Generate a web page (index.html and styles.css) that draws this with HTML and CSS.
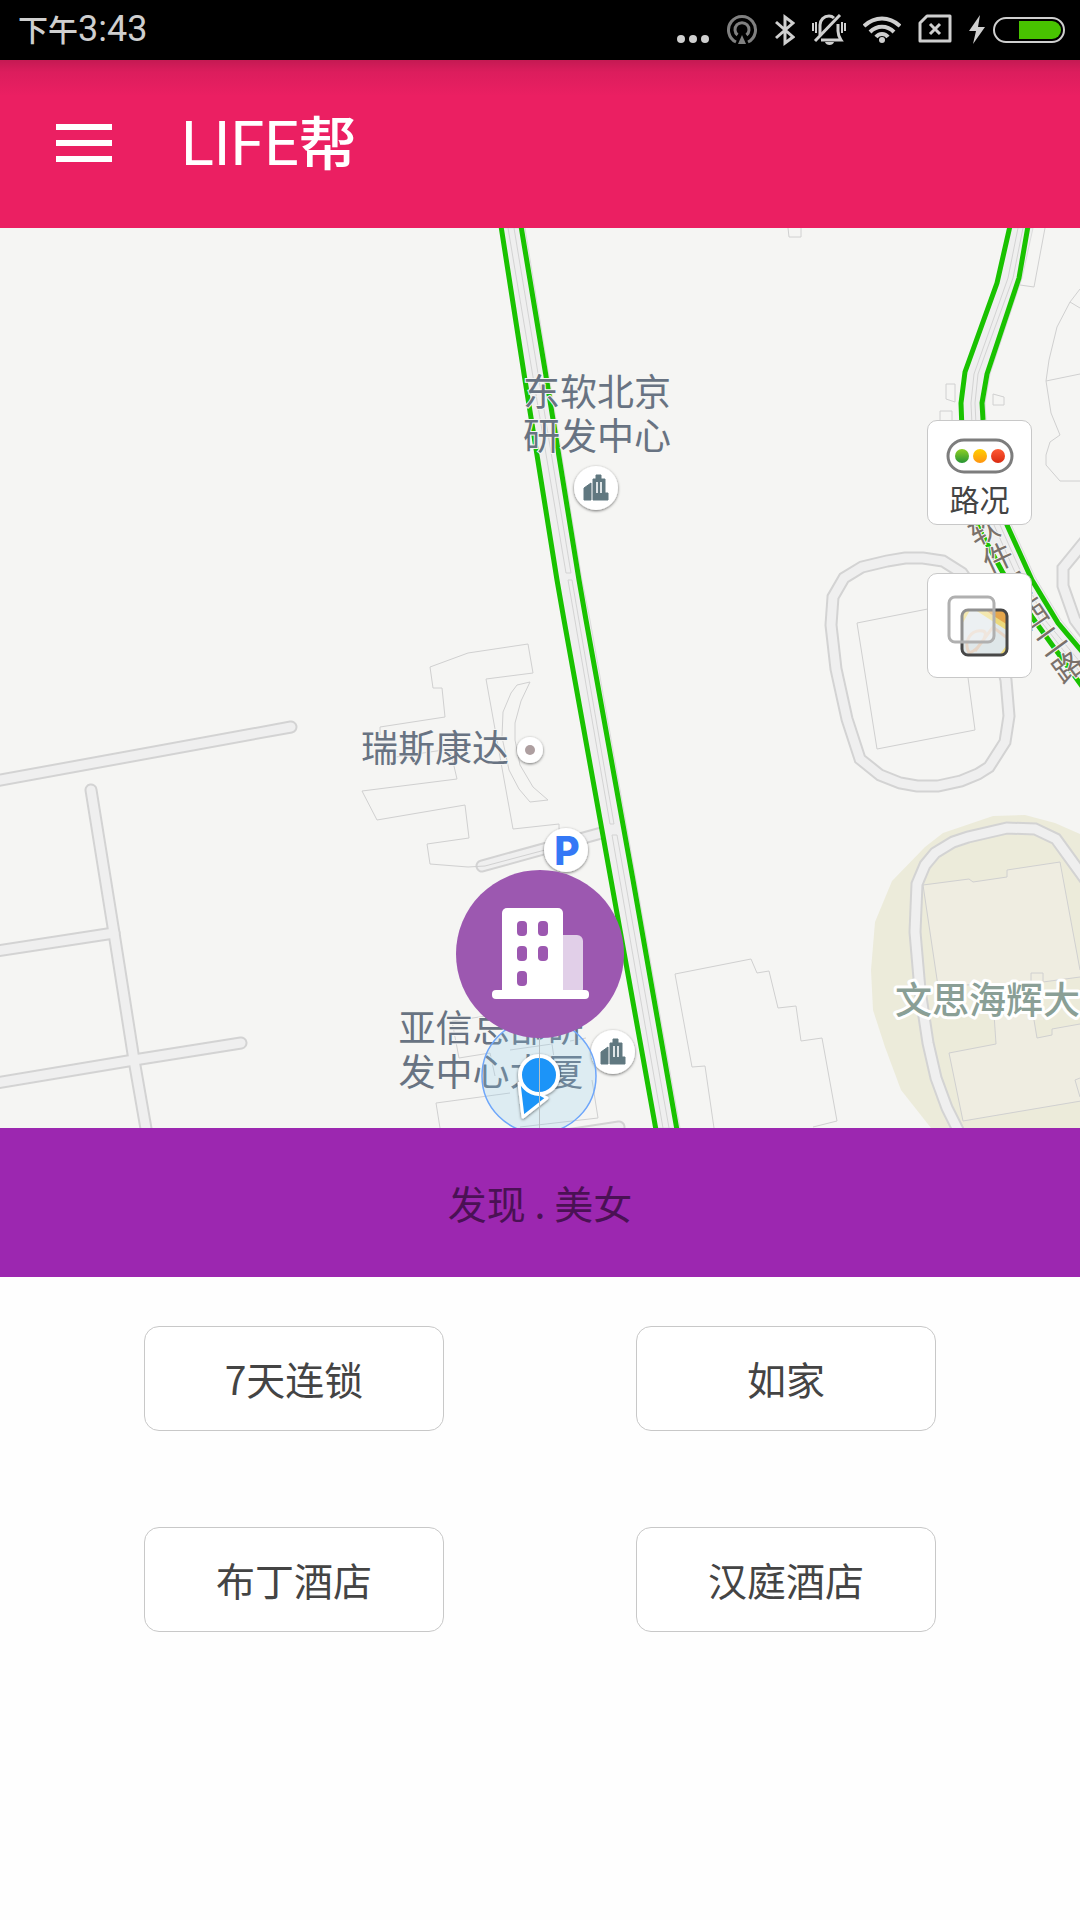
FILE: index.html
```html
<!DOCTYPE html>
<html lang="zh-CN">
  <head>
    <meta charset="UTF-8" />
    <meta name="viewport" content="width=device-width, initial-scale=1.0" />
    <title>LIFE帮</title>
    <link rel="stylesheet" href="styles.css">
  </head>
  <body>
    <div class="status-bar">
      <div class="clock"><span class="ampm">下午</span>3:43</div>
      <div class="status-icons">
        <svg width="32" height="32" fill="#cfcfcf">
          <circle cx="4" cy="25" r="4" />
          <circle cx="16" cy="25" r="4" />
          <circle cx="28" cy="25" r="4" />
        </svg>
        <svg width="32" height="32" fill="none" stroke="#808080" stroke-width="3">
          <path d="M10 28A13.500 13.500 0 1 1 22 28" />
          <path d="M11.500 21A7 7 0 1 1 20.500 21" />
          <path d="M16 21l4 9h-8z" fill="#808080" stroke="none" />
        </svg>
        <svg width="20" height="32" fill="none" stroke="#cfcfcf" stroke-width="3">
          <path d="M1 8l17 15-8 6V3l8 6L1 24" />
        </svg>
        <svg width="34" height="32" fill="none" stroke="#cfcfcf" stroke-width="3">
          <path d="M3 27L28 1" />
          <path d="M8 21V11c0-5 4-9 9-9 2 0 4 1 5 2" />
          <path d="M9 26h20c-2-3-3-5-3-9v-7" />
          <path d="M1 9v8M4 8v11M30 8v11M33 9v8" stroke-width="2" />
          <path d="M13 28h9c-1 4-8 4-9 0z" fill="#cfcfcf" stroke="none" />
        </svg>
        <svg width="38" height="32" fill="none" stroke="#cfcfcf" stroke-width="4">
          <path d="M1 12c11-10 25-10 36 0" />
          <path d="M7 18c7-7 17-7 24 0" />
          <path d="M13 23c3-4 9-4 12 0" />
          <circle cx="19" cy="26" r="3" fill="#cfcfcf" stroke="none" />
        </svg>
        <svg width="34" height="32" fill="none" stroke="#cfcfcf" stroke-width="3">
          <path d="M2 27V9l7-7h23v25z" stroke-linejoin="round" />
          <path d="M12 10l10 10M22 10L12 20" />
        </svg>
        <div class="battery">
          <svg width="16" height="32" fill="#cfcfcf">
            <path d="M11 1L0 17h7L4 30 16 13H9z" />
          </svg>
          <svg width="72" height="32" fill="none">
            <rect x="1" y="4" width="70" height="24" rx="12" stroke="#cfcfcf" stroke-width="2" />
            <path d="M26 7h33a9 9 0 0 1 0 18H26z" fill="#48c400" />
          </svg>
        </div>
      </div>
    </div>

    <header class="toolbar">
      <button class="menu-btn" type="button" aria-label="菜单">
        <svg width="56" height="38" fill="#fff">
          <rect width="56" height="6" />
          <rect y="16" width="56" height="6" />
          <rect y="32" width="56" height="6" />
        </svg>
      </button>
      <h1>LIFE<span class="cn">帮</span></h1>
    </header>

    <div class="map">
      <svg class="map-canvas" viewBox="0 228 1080 900">
        <defs>
          <filter id="shadow" x="-30%" y="-30%" width="160%" height="160%">
            <feDropShadow dx="0" dy="1" stdDeviation="1.500" flood-opacity=".55" />
          </filter>
          <g id="office">
            <circle r="22" fill="#fff" filter="url(#shadow)" />
            <path d="M-12 0l7-5v17h-7zM-3-9h3v-4h5v4h4v14h3v7H-3z" fill="#607880" stroke="#607880" stroke-linejoin="round" />
            <path d="M1-6v11M5-6v11" stroke="#dfe5e7" stroke-width="2" />
          </g>
          <!-- side roads, drawn twice: casing and fill -->
          <g id="streets">
            <path d="M-10 782L291 727" />
            <path d="M91 790L114 933 134 1060 148 1140" />
            <path d="M-10 952L114 933" />
            <path d="M-10 1084L134 1060 241 1043" />
            <path d="M482 866L605 832" />
            <path d="M520 1142L619 1127" />
            <path d="M962 573L943 561 923 558H905L887 561 862 567 844 578 833 597 831 625 836 669 847 719 860 759 880 775 900 783 917 786H938L961 781 978 774 989 767 1005 742 1009 716 1006 680 985 605z" />
            <path d="M1090 535L1063 568V586L1075 620 1090 640" />
            <path d="M1090 886L1056 839 1035 829 1007 828 968 837 953 842 935 853 925 865 917 884 915 932 920 990 928 1043 936 1078 947 1108 963 1140" />
          </g>
        </defs>

        <path class="park" d="M1080 834L1055 823 1025 815 993 816 943 833 925 847 892 881 875 922 871 970 873 1010 885 1047 901 1090 931 1128H1080z" />
        <path class="block" d="M923 885L969 879 973 882 1007 877V870L1060 862 1080 970V1101L963 1121 949 1053 996 1044 992 984 938 986z" />
        <path class="park" d="M1034 1020L1037 1038 1052 1035V1029L1080 1024V977L1043 982V1020z" />

        <g class="outline">
          <path d="M923 885L969 879 973 882 1007 877V870L1060 862 1080 970M923 885L938 986 992 984 996 1044 949 1053 963 1121 1081 1101" />
          <path d="M1080 977L1043 982V973H1031V984M1034 1020L1037 1038 1052 1035V1029L1080 1024M1080 1078L1075 1080 1080 1097" />
          <path d="M788 228L789 237H801V228M1045 228L1034 287 1020 285" />
          <path d="M1080 289L1070 302 1057 327 1049 360 1046 381 1051 413 1060 435 1050 442 1046 455V465L1060 481H1080M1046 381L1080 374M1070 302L1080 308" />
          <path d="M946 384H955V402L946 399zM940 420V411H952V420M993 394L1004 397V405H993z" />
          <path d="M857 623L958 603 975 730 877 749z" />
          <path d="M714 1128L705 1066 692 1067 675 974 751 959 757 973 769 971 778 1008 796 1006 801 1041 822 1038 837 1121 813 1127" />
          <path d="M380 735V727L445 717 442 688H433L430 667 468 653 528 644 533 673 486 679 513 829 559 824V833" />
          <path d="M396 757L450 749 457 779 362 791 377 820 465 805 469 838 427 844 430 864 468 867" />
          <path d="M530 682L517 685 511 693 503 712 502 737 509 770 519 789 530 802 548 800 533 787 520 765 515 740V723L521 701z" />
          <path d="M452 1021L459 1058 490 1053 495 1076M452 1021L500 1014M440 1128L436 1103 510 1093M510 1050L552 1044 555 1065M570 1041L586 1038M592 1080L598 1118 520 1127" />
        </g>

        <use href="#streets" class="casing" />
        <use href="#streets" class="road" />
        <path class="outline" d="M468 867L485 866 545 850" />

        <path class="carriage" d="M501 228L557 580 655 1128H680L590 620 582 580 525 228z" />
        <path class="carriage" d="M1010 228L997 283 965 372 961 403 962 430 977 525 1003 573 1032 617 1090 698V655L1061 620 1035 577 1010 522 986 420 985 403 990 374 1022 278 1033 228z" />
        <path class="median" d="M508 228L566 573H571L514 228M568 580H572L614 824H610zM612 835H617L669 1128M612 835L663 1128" />
        <path class="median" d="M1018 228L1008 278 974 374 971 403 972 425M1023 228L1013 278 978 374 975 403 976 425M1000 525L1020 570 1045 620 1080 662M994 525L1014 570 1040 620 1080 672" />
        <g class="traffic">
          <path d="M501 226L525 380 557 580 564 620 611 880 656 1130" />
          <path d="M521 226L545 370 579 580 586 620 633 880 677 1130" />
          <path d="M1010 226L997 283 965 372 961 403 962 430 977 525 1003 573 1032 617 1084 689" />
        </g>

        <g class="street-name">
          <text transform="translate(984 530) rotate(-25)" y="11">软</text>
          <text transform="translate(998 558) rotate(-25)" y="11">件</text>
          <text transform="translate(1015 588) rotate(-30)" y="11">园</text>
          <text transform="translate(1033 614) rotate(-34)" y="11">西</text>
          <text transform="translate(1051 641) rotate(-36)" y="11">二</text>
          <text transform="translate(1068 667) rotate(-36)" y="11">路</text>
        </g>
        <path class="traffic" d="M1028 226L1019 278 987 374 982 403 983 420 1007 525 1032 580 1058 623 1084 654" />

        <g class="place">
          <text x="597" y="406">东软北京</text>
          <text x="597" y="450">研发中心</text>
          <text x="435" y="762">瑞斯康达</text>
          <text x="491" y="1042">亚信总部研</text>
          <text x="491" y="1086">发中心大厦</text>
        </g>
        <text class="place-park" x="895" y="1014">文思海辉大</text>

        <use href="#office" x="596" y="488" />
        <use href="#office" x="613" y="1052" />
        <circle cx="530" cy="750" r="13" fill="#fff" filter="url(#shadow)" />
        <circle cx="530" cy="750" r="5" fill="#ae9fa0" />
        <circle cx="566" cy="850" r="22" fill="#fff" filter="url(#shadow)" />
        <text class="parking" x="567" y="865">P</text>

        <!-- my location -->
        <circle cx="539" cy="1076" r="57" fill="#8acdf0" fill-opacity=".22" stroke="#6ea6fa" stroke-width="1.500" />
        <g filter="url(#shadow)">
          <path d="M519 1083L523 1117 547 1098z" fill="#1b94f8" stroke="#fff" stroke-width="3" stroke-linejoin="round" />
          <circle cx="539" cy="1075" r="19" fill="#1b94f8" stroke="#fff" stroke-width="4" />
        </g>
        <path d="M539.500 1038V1128" stroke="#b8c0c4" />

        <!-- hotel pin -->
        <circle cx="540" cy="954" r="84" fill="#9c58b0" />
        <rect x="556" y="935" width="27" height="60" rx="6" fill="#e1cfe8" />
        <rect x="502" y="908" width="61" height="88" rx="5" fill="#fff" />
        <rect x="492" y="990" width="97" height="9" rx="4" fill="#fff" />
        <g fill="#9c58b0">
          <rect x="517" y="921" width="10" height="15" rx="4" />
          <rect x="538" y="921" width="10" height="15" rx="4" />
          <rect x="517" y="946" width="10" height="15" rx="4" />
          <rect x="538" y="946" width="10" height="15" rx="4" />
          <rect x="517" y="971" width="10" height="15" rx="4" />
        </g>
      </svg>

      <div class="map-tools">
        <button class="tool traffic-tool" type="button">
          <svg width="68" height="36">
            <defs>
              <linearGradient id="g" x2="0" y2="1"><stop stop-color="#8fd024" /><stop offset="1" stop-color="#259433" /></linearGradient>
              <linearGradient id="y" x2="0" y2="1"><stop stop-color="#ffd000" /><stop offset="1" stop-color="#ff9412" /></linearGradient>
              <linearGradient id="r" x2="0" y2="1"><stop stop-color="#ff5a34" /><stop offset="1" stop-color="#d92a10" /></linearGradient>
            </defs>
            <rect x="2" y="2" width="64" height="32" rx="16" fill="#fff" stroke="#7d7d7d" stroke-width="3" />
            <circle cx="16" cy="18" r="7" fill="url(#g)" />
            <circle cx="34" cy="18" r="7" fill="url(#y)" />
            <circle cx="52" cy="18" r="7" fill="url(#r)" />
          </svg>
          <span>路况</span>
        </button>
        <button class="tool" type="button" aria-label="图层">
          <svg width="66" height="62">
            <clipPath id="tile"><rect x="15" y="15" width="45" height="45" rx="6" /></clipPath>
            <g clip-path="url(#tile)" fill="none">
              <path d="M15 15h45v45H15z" fill="#dfe7e9" />
              <path d="M35 12h30v26z" fill="#e5a64c" />
              <path d="M22 8l42 27M14 26l8-14M54 62l9-12" stroke="#ecd97c" stroke-width="5" />
              <path d="M22 58c-6-12 2-24 14-22 8 2-6 20-14 22M28 56l18-24 18 14" stroke="#e6d5c6" stroke-width="3" />
            </g>
            <rect x="15" y="15" width="45" height="45" rx="6" fill="none" stroke="#474747" stroke-width="3" />
            <rect x="2" y="2" width="45" height="45" rx="6" fill="#fff" fill-opacity=".4" stroke="#b0b0b0" stroke-width="3" />
          </svg>
        </button>
      </div>
    </div>

    <div class="discover">发现 . 美女</div>

    <div class="hotels">
      <button type="button">7天连锁</button>
      <button type="button">如家</button>
      <button type="button">布丁酒店</button>
      <button type="button">汉庭酒店</button>
    </div>
  </body>
</html>
```
FILE: styles.css
```css
* {
  box-sizing: border-box;
}
body {
  margin: 0;
  background: #fefefe;
  font-family: "Noto Sans CJK SC", sans-serif;
  color: #444;
}
button {
  font-family: inherit;
  color: inherit;
  cursor: pointer;
}
svg {
  display: block;
}
.status-bar {
  display: flex;
  justify-content: space-between;
  align-items: center;
  height: 60px;
  padding: 0 15px 0 18px;
  background: #000;
}
.clock {
  font-family: Roboto, "Noto Sans CJK SC", sans-serif;
  font-size: 36px;
  line-height: 60px;
  color: #cfcfcf;
}
.ampm {
  font-size: 30px;
  font-weight: 500;
}
.status-icons {
  display: flex;
  gap: 17px;
}
.battery {
  display: flex;
  gap: 8px;
}
.toolbar {
  display: flex;
  align-items: center;
  gap: 69px;
  height: 168px;
  padding: 0 56px 2px;
  background: linear-gradient(#c41a53, #dc1d5d 12px, #eb1f62 36px);
}
.menu-btn {
  padding: 0;
  border: none;
  background: none;
}
.toolbar h1 {
  margin: 0;
  padding-top: 2px;
  font-family: Roboto, "Noto Sans CJK SC", sans-serif;
  font-size: 61px;
  font-weight: 400;
  line-height: 72px;
  color: #fff;
}
.toolbar .cn {
  font-size: 58px;
  font-weight: 500;
}
.map {
  position: relative;
  background: #f5f5f3;
}
.map-canvas {
  width: 100%;
  height: auto;
}
.park {
  fill: #ecebda;
}
.block {
  fill: #efede1;
}
.outline {
  fill: none;
  stroke: #d0d0d0;
}
.casing {
  fill: none;
  stroke: #d3d3d3;
  stroke-width: 13px;
  stroke-linecap: round;
}
.road {
  fill: none;
  stroke: #efefef;
  stroke-width: 9px;
  stroke-linecap: round;
}
.carriage {
  fill: #efefef;
  stroke: #dcdcdc;
}
.median {
  fill: none;
  stroke: #d3d3d3;
}
.traffic {
  fill: none;
  stroke: #19c200;
  stroke-width: 5px;
}
.street-name {
  fill: #7a716a;
  font-size: 30px;
  text-anchor: middle;
  stroke: #f5f5f3;
  stroke-width: 2px;
  paint-order: stroke;
}
.place {
  fill: #687382;
  font-size: 37px;
  text-anchor: middle;
  stroke: #f5f5f3;
  stroke-width: 2px;
  paint-order: stroke;
}
.place-park {
  fill: #8a9f96;
  font-size: 37px;
  font-weight: 500;
  stroke: #fff;
  stroke-width: 6px;
  stroke-linejoin: round;
  paint-order: stroke;
}
.parking {
  fill: #3478f6;
  font-family: Inter, sans-serif;
  font-size: 39px;
  font-weight: 800;
  text-anchor: middle;
}
.map-tools {
  position: absolute;
  top: 192px;
  right: 48px;
  display: flex;
  flex-direction: column;
  gap: 48px;
}
.tool {
  display: flex;
  flex-direction: column;
  align-items: center;
  justify-content: center;
  gap: 4px;
  width: 105px;
  height: 105px;
  padding: 0;
  border: 1px solid #c8c8c8;
  border-radius: 10px;
  background: #fff;
  font-size: 30px;
  line-height: 40px;
}
.traffic-tool {
  padding-top: 10px;
}
.discover {
  padding: 44px 0;
  background: #9c27b0;
  font-size: 39px;
  line-height: 61px;
  text-align: center;
  color: #4a1154;
}
.hotels {
  display: grid;
  grid-template-columns: 1fr 1fr;
  gap: 96px 192px;
  padding: 49px 144px;
}
.hotels button {
  height: 105px;
  padding: 0 0 2px;
  border: 1px solid #c8c8c8;
  border-radius: 15px;
  background: #fff;
  font-size: 39px;
}
```
